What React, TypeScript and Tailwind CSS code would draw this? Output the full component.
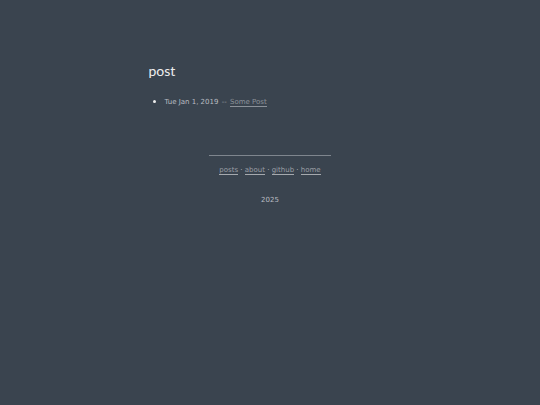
const links = [
  { name: 'posts', href: '#posts' },
  { name: 'about', href: '#about' },
  { name: 'github', href: '#github' },
  { name: 'home', href: '#home' },
]

export default function App() {
  return (
    <div className="min-h-screen bg-[#3a444f] font-['DejaVu_Sans',sans-serif] text-[7px] leading-3 text-[#b9bdc2]">
      <div className="mx-auto w-[45%] pt-[63px]">
        <main>
          <h1 className="font-['Lato',sans-serif] text-sm leading-4 text-[#eeeeee]">post</h1>
          <ul className="mt-4 list-disc pl-4 marker:text-[9px] marker:text-[#eeeeee]">
            <li>
              Tue Jan 1, 2019 <span className="mx-px text-[#9a9fa5]">--</span>{' '}
              <a href="#some-post" className="border-b border-[#8b9199] text-[#8b9199]">Some Post</a>
            </li>
          </ul>
        </main>
        <footer className="mt-[47px] text-center">
          <hr className="mx-auto w-1/2 border-[#7f868e]" />
          <nav className="mt-2">
            {links.map((link, i) => (
              <span key={link.name}>
                {i > 0 && ' · '}
                <a href={link.href} className="border-b border-[#a5a9ae] text-[#9a9fa5]">{link.name}</a>
              </span>
            ))}
          </nav>
          <p className="mt-[18px]">2025</p>
        </footer>
      </div>
    </div>
  )
}
